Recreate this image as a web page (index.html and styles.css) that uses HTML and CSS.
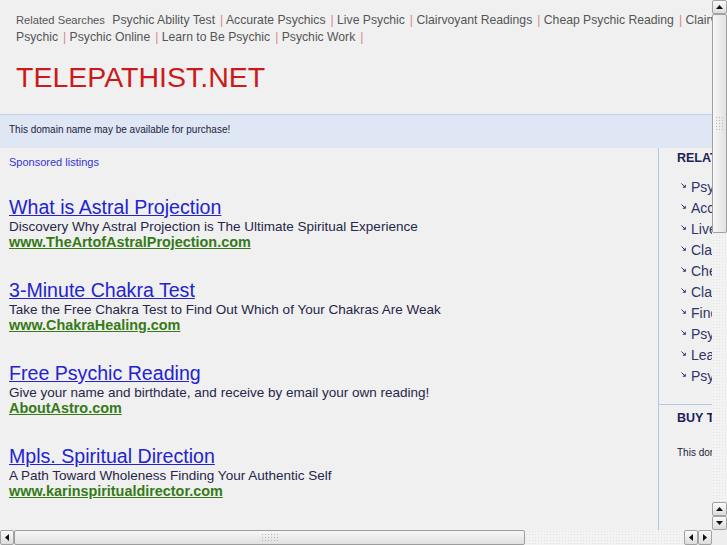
FILE: index.html
```html
<!DOCTYPE html>
<html lang="en">
<head>
    <meta charset="UTF-8">
    <title>telepathist.net</title>
    <link rel="stylesheet" href="styles.css">
</head>
<body>

<div id="page">
    <div id="header">
        <div class="related">
            <span class="rel-label">Related Searches</span>
            <a href="#">Psychic Ability Test</a><span class="sep">|</span>
            <a href="#">Accurate Psychics</a><span class="sep">|</span>
            <a href="#">Live Psychic</a><span class="sep">|</span>
            <a href="#">Clairvoyant Readings</a><span class="sep">|</span>
            <a href="#">Cheap Psychic Reading</a><span class="sep">|</span>
            <a href="#">Clairvoyant Psychic</a><span class="sep">|</span>
            <a href="#">Psychic Online</a><span class="sep">|</span>
            <a href="#">Learn to Be Psychic</a><span class="sep">|</span>
            <a href="#">Psychic Work</a><span class="sep">|</span>
        </div>
        <div class="logo">TELEPATHIST.NET</div>
    </div>

    <div id="banner">This domain name may be available for purchase!</div>

    <div id="main">
        <div class="listings">
            <div class="sponsored">Sponsored listings</div>

            <div class="adlist">
                <div class="ad">
                    <a class="adtitle" href="#">What is Astral Projection</a>
                    <div class="addesc">Discovery Why Astral Projection is The Ultimate Spiritual Experience</div>
                    <a class="adurl" href="#">www.TheArtofAstralProjection.com</a>
                </div>
                <div class="ad">
                    <a class="adtitle" href="#">3-Minute Chakra Test</a>
                    <div class="addesc">Take the Free Chakra Test to Find Out Which of Your Chakras Are Weak</div>
                    <a class="adurl" href="#">www.ChakraHealing.com</a>
                </div>
                <div class="ad">
                    <a class="adtitle" href="#">Free Psychic Reading</a>
                    <div class="addesc">Give your name and birthdate, and receive by email your own reading!</div>
                    <a class="adurl" href="#">AboutAstro.com</a>
                </div>
                <div class="ad">
                    <a class="adtitle" href="#">Mpls. Spiritual Direction</a>
                    <div class="addesc">A Path Toward Wholeness Finding Your Authentic Self</div>
                    <a class="adurl" href="#">www.karinspiritualdirector.com</a>
                </div>
            </div>
        </div>

        <div class="side">
            <div class="sidebox">
                <h3>RELATED SEARCHES</h3>
                <ul>
                    <li><svg width="5" height="5" viewBox="0 0 5 5"><path d="M0.5 0.5 L3 3" stroke="#2e3568" stroke-width="1"/><polygon points="4.8,1.4 4.8,4.8 1.4,4.8" fill="#2e3568"/></svg><a href="#">Psychic Ability Test</a></li>
                    <li><svg width="5" height="5" viewBox="0 0 5 5"><path d="M0.5 0.5 L3 3" stroke="#2e3568" stroke-width="1"/><polygon points="4.8,1.4 4.8,4.8 1.4,4.8" fill="#2e3568"/></svg><a href="#">Accurate Psychics</a></li>
                    <li><svg width="5" height="5" viewBox="0 0 5 5"><path d="M0.5 0.5 L3 3" stroke="#2e3568" stroke-width="1"/><polygon points="4.8,1.4 4.8,4.8 1.4,4.8" fill="#2e3568"/></svg><a href="#">Live Psychic</a></li>
                    <li><svg width="5" height="5" viewBox="0 0 5 5"><path d="M0.5 0.5 L3 3" stroke="#2e3568" stroke-width="1"/><polygon points="4.8,1.4 4.8,4.8 1.4,4.8" fill="#2e3568"/></svg><a href="#">Clairvoyant Readings</a></li>
                    <li><svg width="5" height="5" viewBox="0 0 5 5"><path d="M0.5 0.5 L3 3" stroke="#2e3568" stroke-width="1"/><polygon points="4.8,1.4 4.8,4.8 1.4,4.8" fill="#2e3568"/></svg><a href="#">Cheap Psychic Reading</a></li>
                    <li><svg width="5" height="5" viewBox="0 0 5 5"><path d="M0.5 0.5 L3 3" stroke="#2e3568" stroke-width="1"/><polygon points="4.8,1.4 4.8,4.8 1.4,4.8" fill="#2e3568"/></svg><a href="#">Clairvoyant Psychic</a></li>
                    <li><svg width="5" height="5" viewBox="0 0 5 5"><path d="M0.5 0.5 L3 3" stroke="#2e3568" stroke-width="1"/><polygon points="4.8,1.4 4.8,4.8 1.4,4.8" fill="#2e3568"/></svg><a href="#">Find a Psychic</a></li>
                    <li><svg width="5" height="5" viewBox="0 0 5 5"><path d="M0.5 0.5 L3 3" stroke="#2e3568" stroke-width="1"/><polygon points="4.8,1.4 4.8,4.8 1.4,4.8" fill="#2e3568"/></svg><a href="#">Psychic Online</a></li>
                    <li><svg width="5" height="5" viewBox="0 0 5 5"><path d="M0.5 0.5 L3 3" stroke="#2e3568" stroke-width="1"/><polygon points="4.8,1.4 4.8,4.8 1.4,4.8" fill="#2e3568"/></svg><a href="#">Learn to Be Psychic</a></li>
                    <li><svg width="5" height="5" viewBox="0 0 5 5"><path d="M0.5 0.5 L3 3" stroke="#2e3568" stroke-width="1"/><polygon points="4.8,1.4 4.8,4.8 1.4,4.8" fill="#2e3568"/></svg><a href="#">Psychic Work</a></li>
                </ul>
            </div>
            <div class="sidebox buybox">
                <h3>BUY THIS DOMAIN</h3>
                <p>This domain name may be available for purchase!</p>
            </div>
        </div>
    </div>
</div>

<!-- window scrollbars -->
<div class="vscroll">
    <div class="sbbtn"><svg width="7" height="4" viewBox="0 0 7 4"><polygon points="0,4 7,4 3.5,0" fill="#111"/></svg></div>
    <div class="vthumb"><div class="grip vgrip"></div></div>
    <div class="vtrack"></div>
    <div class="sbbtn"><svg width="7" height="4" viewBox="0 0 7 4"><polygon points="0,4 7,4 3.5,0" fill="#111"/></svg></div>
    <div class="sbbtn"><svg width="7" height="4" viewBox="0 0 7 4"><polygon points="0,0 7,0 3.5,4" fill="#111"/></svg></div>
</div>
<div class="hscroll">
    <div class="sbbtn"><svg width="4" height="7" viewBox="0 0 4 7"><polygon points="4,0 4,7 0,3.5" fill="#111"/></svg></div>
    <div class="hthumb"><div class="grip hgrip"></div></div>
    <div class="htrack"></div>
    <div class="sbbtn"><svg width="4" height="7" viewBox="0 0 4 7"><polygon points="4,0 4,7 0,3.5" fill="#111"/></svg></div>
    <div class="sbbtn"><svg width="4" height="7" viewBox="0 0 4 7"><polygon points="0,0 0,7 4,3.5" fill="#111"/></svg></div>
</div>
<div class="sbcorner"></div>

</body>
</html>
```

FILE: styles.css
```css
html, body{
    margin: 0;
    overflow: hidden;
}

body{
    background: #f0f0f0;
    font-family: "Liberation Sans", Arial, sans-serif;
}

a{
    color: inherit;
}

#page{
    width: 930px;
}

/* top header */
#header{
    padding: 12px 0 20px 16px;
}

.related{
    width: 760px;
    font-size: 12.2px;
    line-height: 17px;
    color: #555555;
}

.related a{
    color: #555555;
    text-decoration: none;
}

.rel-label{
    font-size: 11.2px;
    line-height: 12px;
    margin-right: 4px;
}

.sep{
    color: #d98686;
    margin-left: 5px;
}

.logo{
    margin-top: 13.5px;
    font-size: 28.5px;
    line-height: 34px;
    color: #cc1a1a;
}

#banner{
    border-top: 1px solid #c3d1ee;
    background: #dfe6f4;
    padding: 8px 9px 12px;
    font-size: 10px;
    line-height: 13px;
    color: #1c1c3c;
}

/* content */
#main{
    display: flex;
    min-height: 700px;
}

.listings{
    width: 659px;
    box-sizing: border-box;
    border-right: 1px solid #b3c6ea;
    padding: 7px 0 0 9px;
}

.sponsored{
    font-size: 11px;
    line-height: 14px;
    color: #3434d8;
}

.adlist{
    margin-top: 27.5px;
}

.ad{
    margin-bottom: 30px;
}

.adtitle{
    display: block;
    width: max-content;
    font-size: 19.6px;
    line-height: 22px;
    color: #2323cf;
}

.addesc{
    font-size: 13.5px;
    line-height: 17px;
    color: #262648;
}

.adurl{
    display: block;
    width: max-content;
    font-size: 14.4px;
    line-height: 14px;
    font-weight: bold;
    color: #357a17;
}

.side{
    width: 271px;
}

.sidebox{
    padding: 3.5px 0 17px 18px;
}

.sidebox h3{
    margin: 0;
    font-size: 12.5px;
    line-height: 15px;
    color: #1b1f55;
}

.sidebox ul{
    list-style: none;
    margin: 11px 0 0;
    padding: 0 0 0 4px;
}

.sidebox li{
    display: flex;
    align-items: flex-start;
    gap: 5px;
    font-size: 14px;
    line-height: 21px;
    white-space: nowrap;
}

.sidebox li svg{
    margin-top: 6px;
    flex: none;
}

.sidebox li a{
    color: #2e3568;
    text-decoration: none;
}

.buybox{
    border-top: 1px solid #b3c6ea;
    padding-top: 6px;
}

.buybox p{
    margin: 20px 0 0;
    font-size: 10px;
    line-height: 13px;
    color: #1c1c3c;
    white-space: nowrap;
}

/* scrollbars drawn over the page */
.vscroll{
    position: fixed;
    top: 0;
    right: 0;
    width: 15px;
    height: 530px;
    display: flex;
    flex-direction: column;
    background: #ebebeb;
}

.hscroll{
    position: fixed;
    left: 0;
    bottom: 0;
    width: 712px;
    height: 15px;
    display: flex;
    background: #ebebeb;
}

.sbcorner{
    position: fixed;
    right: 0;
    bottom: 0;
    width: 15px;
    height: 15px;
    background: #eeeeee;
}

.sbbtn{
    flex: none;
    box-sizing: border-box;
    border: 1px solid #a3a3a3;
    border-radius: 2px;
    background: linear-gradient(#fbfbfb, #dcdcdc);
    display: flex;
    align-items: center;
    justify-content: center;
}

.vscroll .sbbtn{
    width: 15px;
    height: 14px;
}

.hscroll .sbbtn{
    width: 14px;
    height: 15px;
}

.vthumb{
    flex: none;
    height: 219px;
    box-sizing: border-box;
    border: 1px solid #a0a0a0;
    border-radius: 2px;
    background: linear-gradient(to right, #f7f7f7, #e2e2e2);
    display: flex;
    align-items: center;
    justify-content: center;
}

.hthumb{
    flex: none;
    width: 511px;
    box-sizing: border-box;
    border: 1px solid #9c9c9c;
    border-radius: 2px;
    background: linear-gradient(#f7f7f7, #e0e0e0);
    display: flex;
    align-items: center;
    justify-content: center;
}

.vtrack, .htrack{
    flex: 1;
    background-color: #f3f3f3;
    background-image: radial-gradient(circle, #e2e2e2 0.6px, transparent 0.8px);
    background-size: 3px 3px;
}

.grip{
    background-image: radial-gradient(circle, #b5b5b5 0.7px, transparent 0.9px);
    background-size: 3px 3px;
}

.vgrip{
    width: 9px;
    height: 15px;
}

.hgrip{
    width: 18px;
    height: 9px;
}
```
